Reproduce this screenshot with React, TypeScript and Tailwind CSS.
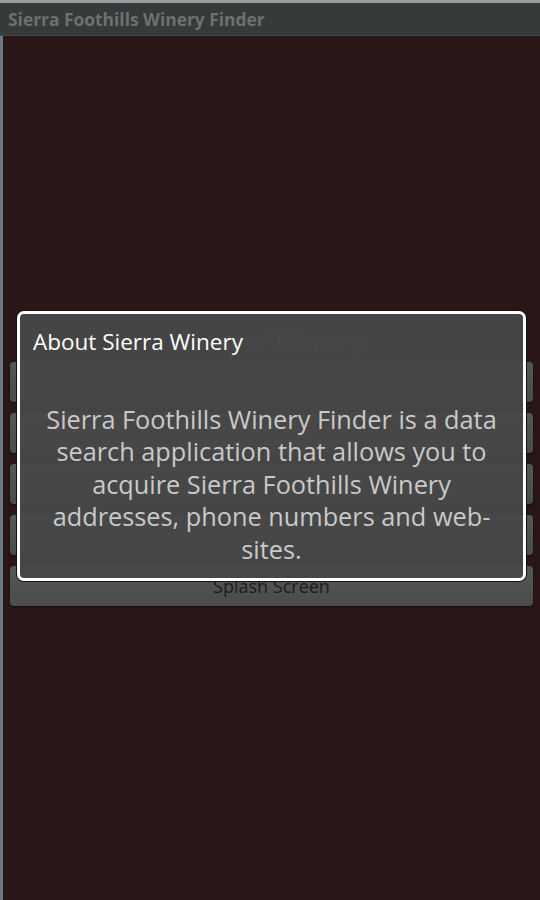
const buttons = ['Winery Home', 'Search Wineries', 'Winery Map', 'About', 'Splash Screen']

export default function App() {
  return (
    <div className="relative w-[540px] h-[900px] overflow-hidden bg-[#281716] font-['Open_Sans','DejaVu_Sans',sans-serif]">
      {/* Title bar */}
      <div className="h-[3px] bg-[#9a9c9c]" />
      <div className="h-[33px] bg-[#363a3a] border-b border-[#444848] flex items-center pl-[8px]">
        <span className="text-[17.4px] font-bold text-[#6e7070]">Sierra Foothills Winery Finder</span>
      </div>

      <div className="flex h-[864px]">
        <div className="w-[3px] bg-[#6a7888]" />
        {/* Main screen */}
        <div className="flex-1 flex flex-col pt-[288px] px-[7px]">
          <div className="text-center text-[28px] font-bold text-[#3c3a3a] leading-[34px] mb-[4px]">Sierra Winery</div>
          <div className="flex flex-col gap-[11px]">
            {buttons.map((b) => (
              <div
                key={b}
                className="h-[40px] rounded-[4px] bg-gradient-to-b from-[#555756] to-[#4a4c4b] shadow-[0_1px_2px_rgba(0,0,0,0.6)] flex items-center justify-center text-[18px] text-[#1c1c1c]"
              >
                {b}
              </div>
            ))}
          </div>
        </div>
      </div>
      <div className="h-[3px] bg-[#4a4c4e]" />

      {/* About dialog */}
      <div className="absolute left-[17px] top-[311px] w-[509px] h-[270px] rounded-[7px] border-[3px] border-white shadow-[0_0_0_1px_#111] bg-[#474747]/[0.97] flex flex-col">
        <div className="h-[58px] flex items-center pl-[13px] pb-[2px]">
          <span className="text-[22.5px] text-white leading-none">About Sierra Winery</span>
        </div>
        <div className="px-[14px] pt-[31px] text-center text-[25.3px] leading-[32.4px] text-[#c9c9c9]">
          Sierra Foothills Winery Finder is a data search application that allows you to acquire Sierra Foothills Winery addresses, phone numbers and web-sites.
        </div>
      </div>
    </div>
  )
}
